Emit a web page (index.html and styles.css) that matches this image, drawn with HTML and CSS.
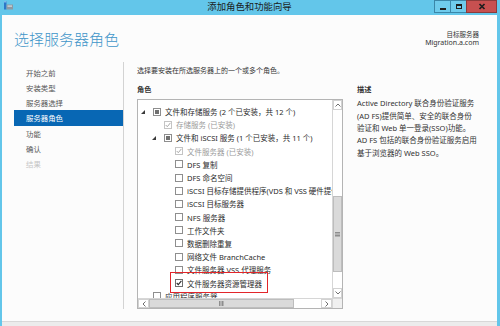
FILE: index.html
```html
<!DOCTYPE html>
<html lang="zh-CN">
<head>
<meta charset="utf-8">
<title>添加角色和功能向导</title>
<link rel="stylesheet" href="styles.css">
</head>
<body>
<div class="window">
  <div class="titlebar">
    <div class="tb-left">
      <svg class="app-icon" width="14" height="11" viewBox="0 0 14 11">
        <rect x="4" y="1" width="2.5" height="8.5" fill="#2b78c8"/>
        <rect x="4" y="1" width="2.5" height="1.5" fill="#7db8ec"/>
        <rect x="6.5" y="4.5" width="6.5" height="5" fill="#8c99a3"/>
        <rect x="7.5" y="5.5" width="4.5" height="1.2" fill="#d6dde2"/>
      </svg>
    </div>
    <div class="tb-title">添加角色和功能向导</div>
    <div class="tb-btns">
      <span class="btn btn-min"><span class="min-bar"></span></span>
      <span class="btn btn-max"><span class="max-box"></span></span>
      <span class="btn btn-close">
        <svg width="8" height="7" viewBox="0 0 8 7"><path d="M1.5 1 L6.5 6 M6.5 1 L1.5 6" stroke="#1e1e1e" stroke-width="1.7"/></svg>
      </span>
    </div>
  </div>
  <div class="body">
    <div class="header">
      <h1 class="heading">选择服务器角色</h1>
      <div class="target">
        <div class="target-label">目标服务器</div>
        <div class="target-name">Migration.a.com</div>
      </div>
    </div>
    <div class="main">
      <nav class="nav">
        <div class="nav-item">开始之前</div>
        <div class="nav-item">安装类型</div>
        <div class="nav-item">服务器选择</div>
        <div class="nav-item active">服务器角色</div>
        <div class="nav-item">功能</div>
        <div class="nav-item">确认</div>
        <div class="nav-item disabled">结果</div>
      </nav>
      <div class="content">
        <div class="col-left">
          <p class="intro">选择要安装在所选服务器上的一个或多个角色。</p>
          <div class="section-label">角色</div>
          <div class="tree">
            <div class="tree-view">
              <div class="row lvl1"><span class="exp"><svg width="4" height="4" viewBox="0 0 4 4"><polygon points="4,0 4,4 0,4" fill="#3a3a3a"/></svg></span><span class="cb ind"></span><span class="txt">文件和存储服务 (2 个已安装，共 12 个)</span></div>
              <div class="row lvl2 dim"><span class="exp"></span><span class="cb dis"><svg width="6" height="6" viewBox="0 0 6 6"><polyline points="0.7,3 2.3,4.7 5.4,0.9" fill="none" stroke="#a8a8a8" stroke-width="1"/></svg></span><span class="txt">存储服务 (已安装)</span></div>
              <div class="row lvl2"><span class="exp"><svg width="4" height="4" viewBox="0 0 4 4"><polygon points="4,0 4,4 0,4" fill="#3a3a3a"/></svg></span><span class="cb ind"></span><span class="txt">文件和 iSCSI 服务 (1 个已安装，共 11 个)</span></div>
              <div class="row lvl3 dim"><span class="exp"></span><span class="cb dis"><svg width="6" height="6" viewBox="0 0 6 6"><polyline points="0.7,3 2.3,4.7 5.4,0.9" fill="none" stroke="#a8a8a8" stroke-width="1"/></svg></span><span class="txt">文件服务器 (已安装)</span></div>
              <div class="row lvl3"><span class="exp"></span><span class="cb"></span><span class="txt">DFS 复制</span></div>
              <div class="row lvl3"><span class="exp"></span><span class="cb"></span><span class="txt">DFS 命名空间</span></div>
              <div class="row lvl3"><span class="exp"></span><span class="cb"></span><span class="txt">iSCSI 目标存储提供程序(VDS 和 VSS 硬件提供程序)</span></div>
              <div class="row lvl3"><span class="exp"></span><span class="cb"></span><span class="txt">iSCSI 目标服务器</span></div>
              <div class="row lvl3"><span class="exp"></span><span class="cb"></span><span class="txt">NFS 服务器</span></div>
              <div class="row lvl3"><span class="exp"></span><span class="cb"></span><span class="txt">工作文件夹</span></div>
              <div class="row lvl3"><span class="exp"></span><span class="cb"></span><span class="txt">数据删除重复</span></div>
              <div class="row lvl3"><span class="exp"></span><span class="cb"></span><span class="txt">网络文件 BranchCache</span></div>
              <div class="row lvl3"><span class="exp"></span><span class="cb"></span><span class="txt">文件服务器 VSS 代理服务</span></div>
              <div class="row lvl3"><span class="exp"></span><span class="hl"><span class="cb on"><svg width="6" height="6" viewBox="0 0 6 6"><polyline points="0.7,3 2.3,4.7 5.4,0.9" fill="none" stroke="#2a2a2a" stroke-width="1.1"/></svg></span><span class="txt">文件服务器资源管理器</span></span></div>
              <div class="row lvl1"><span class="exp"></span><span class="cb"></span><span class="txt">应用程序服务器</span></div>
            </div>
            <div class="vscroll">
              <span class="sb-btn"><svg width="6" height="4" viewBox="0 0 6 4"><polyline points="0.5,3.5 3,1 5.5,3.5" fill="none" stroke="#707070" stroke-width="1"/></svg></span>
              <div class="v-track">
                <div class="v-thumb"><svg width="5" height="5" viewBox="0 0 5 5"><path d="M0 0.5H5M0 2H5M0 3.5H5M0 5H5" stroke="#7a7a7a" stroke-width="0.8"/></svg></div>
              </div>
              <span class="sb-btn"><svg width="6" height="4" viewBox="0 0 6 4"><polyline points="0.5,0.5 3,3 5.5,0.5" fill="none" stroke="#707070" stroke-width="1"/></svg></span>
            </div>
            <div class="hscroll">
              <span class="sb-btn h"><svg width="4" height="6" viewBox="0 0 4 6"><polyline points="3.5,0.5 1,3 3.5,5.5" fill="none" stroke="#707070" stroke-width="1"/></svg></span>
              <div class="h-thumb"><svg width="5" height="5" viewBox="0 0 5 5"><path d="M0.5 0V5M2 0V5M3.5 0V5M5 0V5" stroke="#7a7a7a" stroke-width="0.8"/></svg></div>
              <div class="h-track"></div>
              <span class="sb-btn h"><svg width="4" height="6" viewBox="0 0 4 6"><polyline points="0.5,0.5 3,3 0.5,5.5" fill="none" stroke="#707070" stroke-width="1"/></svg></span>
            </div>
            <div class="corner"></div>
          </div>
        </div>
        <div class="col-right">
          <div class="section-label desc-label">描述</div>
          <p class="desc">Active Directory 联合身份验证服务<br>(AD FS)提供简单、安全的联合身份<br>验证和 Web 单一登录(SSO)功能。<br>AD FS 包括的联合身份验证服务启用<br>基于浏览器的 Web SSO。</p>
        </div>
      </div>
    </div>
    <div class="footer"></div>
  </div>
</div>
</body>
</html>
```

FILE: styles.css
```css
html, body {
  margin: 0;
  padding: 0;
  background: #63c6ea;
}

body {
  font-family: "Noto Sans", "Noto Sans CJK SC", sans-serif;
  color: #333;
}

.window {
  width: 500px;
  height: 326px;
  box-sizing: border-box;
  padding: 0 3px 0 2px;
  background: #63c6ea;
  display: flex;
  flex-direction: column;
}

/* ---------- title bar ---------- */
.titlebar {
  height: 15px;
  flex: none;
  display: grid;
  grid-template-columns: 1fr auto 1fr;
  align-items: start;
}

.tb-left {
  display: flex;
}

.app-icon {
  display: block;
  margin-left: -2px;
}

.tb-title {
  font-family: "Noto Sans CJK SC", sans-serif;
  font-size: 9.4px;
  line-height: 13px;
  color: #1b1b1b;
  white-space: nowrap;
}

.tb-btns {
  display: flex;
  justify-content: flex-end;
}

.btn {
  height: 13px;
  box-sizing: border-box;
  border: 1px solid #3b86a8;
  display: flex;
  align-items: center;
  justify-content: center;
  background: #6fcbec;
}

.btn-min {
  width: 17px;
  align-items: flex-end;
  padding-bottom: 2px;
}

.min-bar {
  width: 6px;
  height: 2px;
  background: #1e1e1e;
}

.btn-max {
  width: 17px;
  margin-left: -1px;
}

.max-box {
  width: 6px;
  height: 5px;
  box-sizing: border-box;
  border: 1px solid #1e1e1e;
  border-top-width: 2px;
}

.btn-close {
  width: 31px;
  margin-left: -1px;
  background: #c75050;
  border-color: #8c3b3b;
}

.btn-close svg {
  display: block;
}

/* ---------- body ---------- */
.body {
  flex: 1;
  display: flex;
  flex-direction: column;
  background: #fcfcfc;
}

.header {
  height: 47px;
  flex: none;
  display: flex;
  justify-content: space-between;
  align-items: flex-start;
}

.heading {
  margin: 0;
  padding: 14px 0 0 12px;
  font-family: "Noto Sans CJK SC", sans-serif;
  font-weight: 300;
  font-size: 15px;
  line-height: 20px;
  color: #3f95c9;
}

.target {
  padding: 15px 18px 0 0;
  text-align: right;
}

.target-label {
  font-family: "Noto Sans CJK SC", sans-serif;
  font-size: 6.5px;
  line-height: 8px;
  color: #333;
}

.target-name {
  font-size: 7px;
  line-height: 8px;
  color: #333;
  margin-top: 0.5px;
}

.main {
  flex: 1;
  display: flex;
  padding-bottom: 12px;
}

/* ---------- nav ---------- */
.nav {
  width: 121px;
  flex: none;
  border-right: 1px solid #d3d3d3;
  padding-top: 3px;
}

.nav-item {
  margin-left: 12px;
  height: 15px;
  line-height: 15px;
  padding-left: 12px;
  font-family: "Noto Sans CJK SC", sans-serif;
  font-size: 7.4px;
  color: #555;
}

.nav-item.active {
  background: #0867b4;
  color: #fff;
  height: 16px;
  line-height: 16px;
}

.nav-item.disabled {
  color: #c6c6c6;
}

/* ---------- content ---------- */
.content {
  flex: 1;
  display: flex;
  gap: 14px;
  padding-left: 13px;
}

.col-left {
  width: 206px;
  flex: none;
}

.intro {
  margin: 0;
  padding-top: 2px;
  font-family: "Noto Sans CJK SC", sans-serif;
  font-size: 7px;
  line-height: 12px;
  color: #333;
  white-space: nowrap;
}

.section-label {
  font-family: "Noto Sans CJK SC", sans-serif;
  font-weight: 700;
  font-size: 7.2px;
  line-height: 12px;
  color: #333;
  margin-top: 6.5px;
}

/* ---------- tree ---------- */
.tree {
  margin-top: 4.5px;
  width: 206px;
  height: 210px;
  box-sizing: border-box;
  border: 1px solid #b4b4b4;
  background: #fff;
  display: grid;
  grid-template-columns: 1fr 10px;
  grid-template-rows: 1fr 10px;
}

.tree-view {
  overflow: hidden;
  padding-top: 5px;
  min-width: 0;
}

.row {
  height: 13.2px;
  display: flex;
  align-items: center;
  white-space: nowrap;
  font-family: "Noto Sans", "Noto Sans CJK SC", sans-serif;
  font-size: 7.5px;
  color: #2b2b2b;
}

.row.lvl1 { padding-left: 1px; }
.row.lvl2 { padding-left: 12px; }
.row.lvl3 { padding-left: 23px; }

.row.dim { color: #9b9b9b; }

.exp {
  width: 14px;
  flex: none;
  display: flex;
  align-items: center;
}

.exp svg {
  display: block;
  margin-left: 2px;
}

.cb {
  width: 8px;
  height: 8px;
  flex: none;
  box-sizing: border-box;
  border: 1px solid #8e8e8e;
  background: #fff;
  margin-right: 4px;
  display: flex;
  align-items: center;
  justify-content: center;
}

.cb svg { display: block; }

.cb.ind::after {
  content: "";
  width: 4px;
  height: 4px;
  background: #707070;
}

.cb.dis { border-color: #c4c4c4; }
.cb.on { border-color: #6e6e6e; }

.hl {
  position: relative;
  display: flex;
  align-items: center;
}

.hl::after {
  content: "";
  position: absolute;
  left: -5px;
  right: -6px;
  top: -6px;
  bottom: -4px;
  border: 1.6px solid #e2262b;
}

/* ---------- scrollbars ---------- */
.vscroll {
  border-left: 1px solid #d6d6d6;
  display: flex;
  flex-direction: column;
}

.sb-btn {
  height: 10px;
  flex: none;
  box-sizing: border-box;
  border: 1px solid #d2d2d2;
  background: #fff;
  display: flex;
  align-items: center;
  justify-content: center;
}

.sb-btn svg { display: block; }

.v-track {
  flex: 1;
  background: #fff;
}

.v-thumb {
  margin-top: 86px;
  height: 76px;
  box-sizing: border-box;
  border: 1px solid #bdbdbd;
  background: #dadada;
  display: flex;
  align-items: center;
  justify-content: center;
}

.v-thumb svg, .h-thumb svg { display: block; }

.hscroll {
  border-top: 1px solid #d6d6d6;
  display: flex;
  min-width: 0;
}

.sb-btn.h {
  width: 11px;
  height: auto;
}

.h-thumb {
  width: 145px;
  flex: none;
  box-sizing: border-box;
  border: 1px solid #bdbdbd;
  background: #dadada;
  display: flex;
  align-items: center;
  justify-content: center;
}

.h-track {
  flex: 1;
  background: #fff;
}

.corner {
  background: #f0f0f0;
  border-top: 1px solid #d6d6d6;
  border-left: 1px solid #d6d6d6;
}

/* ---------- description ---------- */
.col-right {
  padding-top: 21px;
}

.desc-label {
  margin-top: 0;
}

.desc {
  margin: 2.4px 0 0;
  font-family: "Noto Sans", "Noto Sans CJK SC", sans-serif;
  font-size: 7.5px;
  line-height: 12.3px;
  color: #333;
  white-space: nowrap;
}

/* ---------- footer ---------- */
.footer {
  height: 4px;
  flex: none;
  border-top: 1px solid #d8d8d8;
  background: #ececec;
}
```
